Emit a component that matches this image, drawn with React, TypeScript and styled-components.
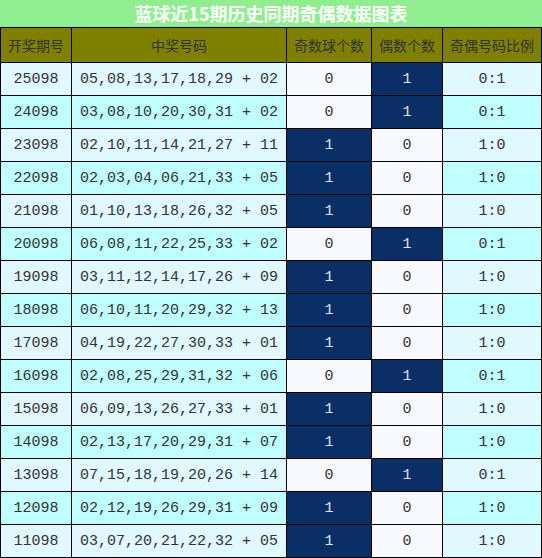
import styled, { createGlobalStyle } from "styled-components";

const GlobalStyle = createGlobalStyle`
  html, body {
    margin: 0;
    padding: 0;
    background: #ffffff;
  }
`

const rows = [
  { issue: "25098", reds: "05,08,13,17,18,29", blue: "02" },
  { issue: "24098", reds: "03,08,10,20,30,31", blue: "02" },
  { issue: "23098", reds: "02,10,11,14,21,27", blue: "11" },
  { issue: "22098", reds: "02,03,04,06,21,33", blue: "05" },
  { issue: "21098", reds: "01,10,13,18,26,32", blue: "05" },
  { issue: "20098", reds: "06,08,11,22,25,33", blue: "02" },
  { issue: "19098", reds: "03,11,12,14,17,26", blue: "09" },
  { issue: "18098", reds: "06,10,11,20,29,32", blue: "13" },
  { issue: "17098", reds: "04,19,22,27,30,33", blue: "01" },
  { issue: "16098", reds: "02,08,25,29,31,32", blue: "06" },
  { issue: "15098", reds: "06,09,13,26,27,33", blue: "01" },
  { issue: "14098", reds: "02,13,17,20,29,31", blue: "07" },
  { issue: "13098", reds: "07,15,18,19,20,26", blue: "14" },
  { issue: "12098", reds: "02,12,19,26,29,31", blue: "09" },
  { issue: "11098", reds: "03,07,20,21,22,32", blue: "05" },
]

const Wrap = styled.div`
  width: 542px;
  font-family: "Liberation Mono", "DejaVu Sans Mono", monospace;
`

const Title = styled.div`
  height: 27px;
  background: #90ee90;
  color: #ffffff;
  font-family: "Noto Sans CJK SC", "Noto Sans", sans-serif;
  font-weight: bold;
  font-size: 18px;
  line-height: 27px;
  text-align: center;
`

const Grid = styled.div`
  display: grid;
  grid-template-columns: 70px 214px 84px 70px 98px;
  grid-auto-rows: 32px;
  grid-template-rows: 34px;
  gap: 1px;
  padding: 1px;
  background: #000000;
`

const Head = styled.div`
  background: #808000;
  color: #333333;
  font-family: "Noto Sans CJK SC", "Noto Sans", sans-serif;
  font-size: 14px;
  display: flex;
  align-items: center;
  justify-content: center;
`

const Cell = styled.div<{ $alt?: boolean }>`
  background: ${(p) => (p.$alt ? "#c0ffff" : "#e0f8ff")};
  color: #333333;
  font-size: 15px;
  display: flex;
  align-items: center;
  justify-content: center;
  white-space: pre;
`

const Mark = styled.div<{ $on: boolean }>`
  background: ${(p) => (p.$on ? "#0a2f66" : "#f8f9ff")};
  color: ${(p) => (p.$on ? "#dde4ee" : "#333333")};
  font-size: 15px;
  display: flex;
  align-items: center;
  justify-content: center;
`

export default function App() {
  return (
    <>
      <GlobalStyle />
      <Wrap>
        <Title>蓝球近15期历史同期奇偶数据图表</Title>
        <Grid>
          <Head>开奖期号</Head>
          <Head>中奖号码</Head>
          <Head>奇数球个数</Head>
          <Head>偶数个数</Head>
          <Head>奇偶号码比例</Head>
          {rows.map((r, i) => {
            const odd = parseInt(r.blue, 10) % 2 === 1
            const alt = i % 2 === 1
            return [
              <Cell key={r.issue + "a"} $alt={alt}>{r.issue}</Cell>,
              <Cell key={r.issue + "b"} $alt={alt}>{`${r.reds} + ${r.blue}`}</Cell>,
              <Mark key={r.issue + "c"} $on={odd}>{odd ? "1" : "0"}</Mark>,
              <Mark key={r.issue + "d"} $on={!odd}>{odd ? "0" : "1"}</Mark>,
              <Cell key={r.issue + "e"} $alt={alt}>{odd ? "1:0" : "0:1"}</Cell>,
            ]
          })}
        </Grid>
      </Wrap>
    </>
  );
}
